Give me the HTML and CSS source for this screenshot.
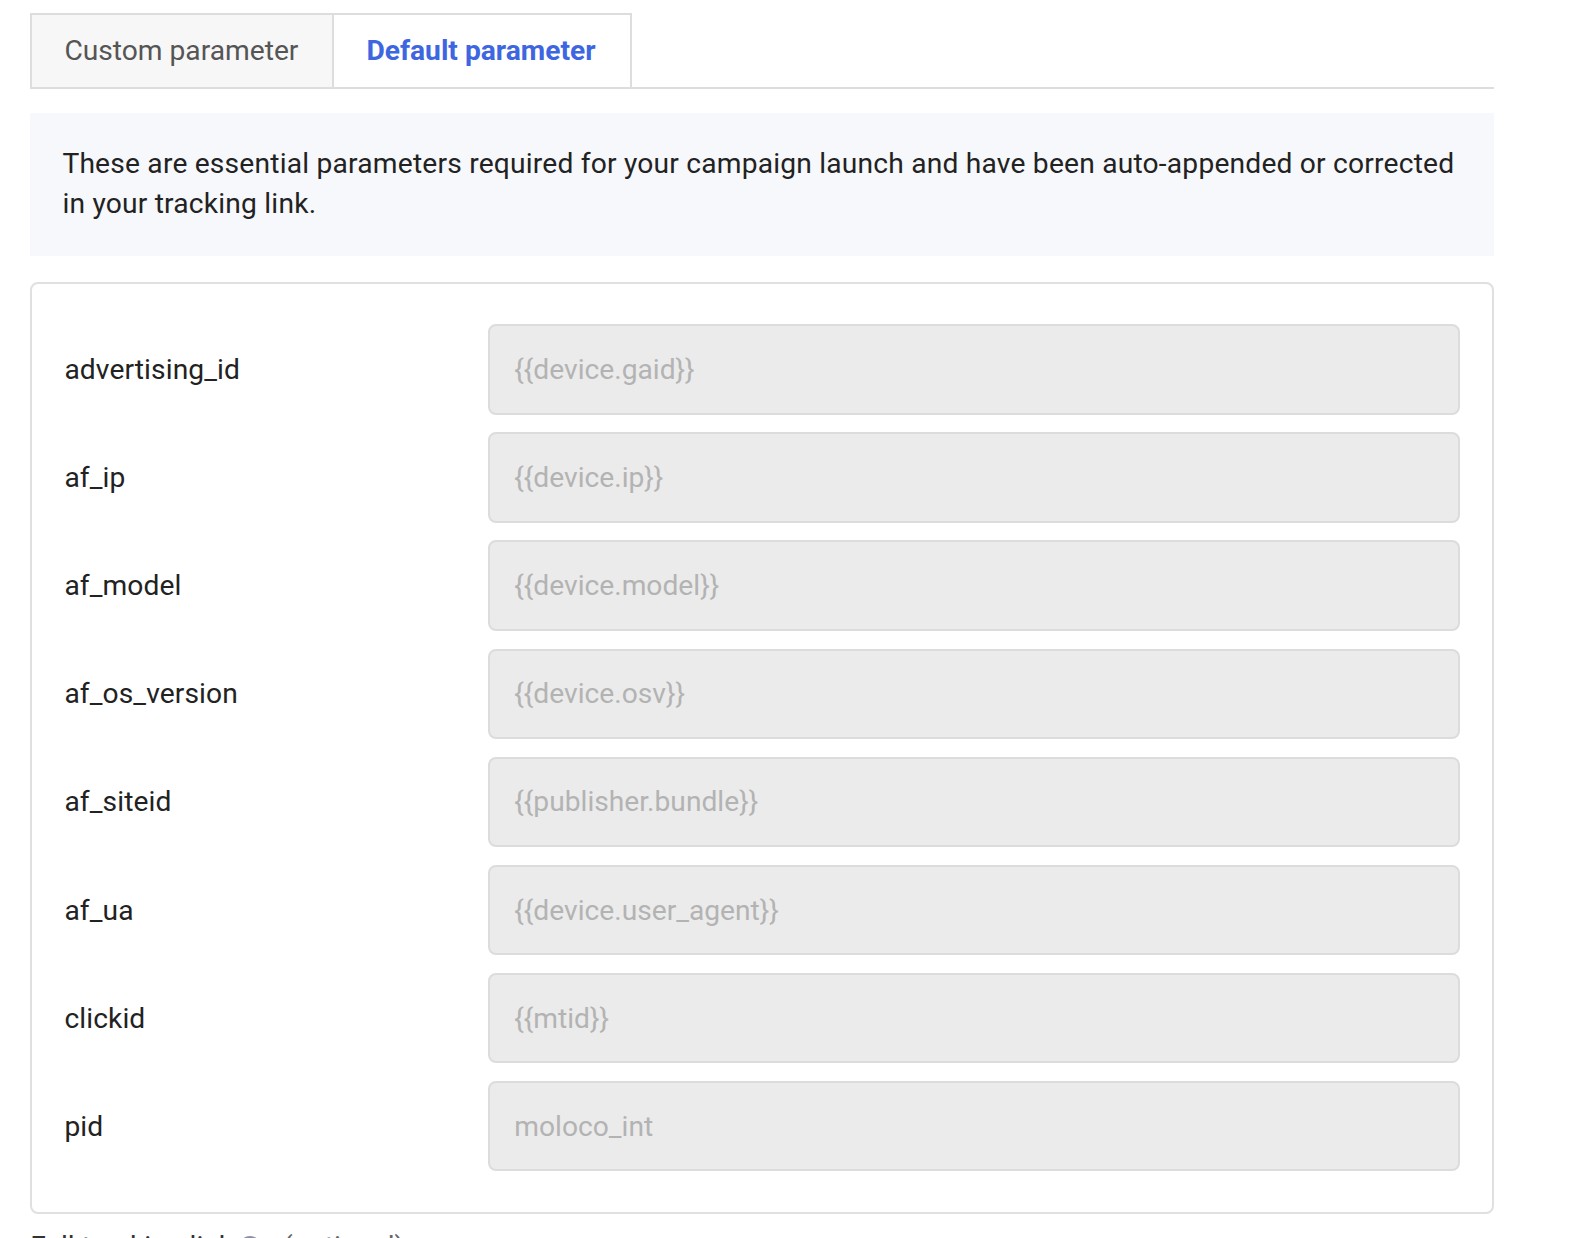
FILE: index.html
```html
<!DOCTYPE html>
<html>
<head>
<meta charset="utf-8">
<link rel="stylesheet" href="styles.css">
</head>
<body>
<div class="page">
  <div class="tabs">
    <div class="tab">Custom parameter</div>
    <div class="tab tab-active">Default parameter</div>
  </div>
  <div class="info">These are essential parameters required for your campaign launch and have been auto-appended or corrected in your tracking link.</div>
  <div class="card">
    <div class="row"><div class="label">advertising_id</div><div class="input">{{device.gaid}}</div></div>
    <div class="row"><div class="label">af_ip</div><div class="input">{{device.ip}}</div></div>
    <div class="row"><div class="label">af_model</div><div class="input">{{device.model}}</div></div>
    <div class="row"><div class="label">af_os_version</div><div class="input">{{device.osv}}</div></div>
    <div class="row"><div class="label">af_siteid</div><div class="input">{{publisher.bundle}}</div></div>
    <div class="row"><div class="label">af_ua</div><div class="input">{{device.user_agent}}</div></div>
    <div class="row"><div class="label">clickid</div><div class="input">{{mtid}}</div></div>
    <div class="row"><div class="label">pid</div><div class="input">moloco_int</div></div>
  </div>
  <div class="footer">
    <span class="footer-label">Full tracking link</span>
    <span class="help-dot"></span>
    <span class="footer-note">(optional)</span>
  </div>
</div>
</body>
</html>
```
FILE: styles.css
```css
html, body {
  margin: 0;
  padding: 0;
  background: #ffffff;
  height: 1238px;
  overflow: hidden;
}
body {
  font-family: Roboto, "Liberation Sans", Arial, sans-serif;
  color: #222222;
}
.page {
  width: 1493.7px;
  height: 1238px;
  box-sizing: border-box;
  overflow: hidden;
  padding: 13.1px 0 0 30.2px;
}
.tabs {
  display: flex;
  border-bottom: 2px solid #dddddd;
  height: 75.5px;
  box-sizing: border-box;
}
.tab {
  display: flex;
  align-items: center;
  padding: 0 0 0 32.2px;
  font-size: 28.2px;
  color: #555555;
  background: #f7f7f7;
  border: 2px solid #dddddd;
  border-bottom: none;
  box-sizing: border-box;
  height: 73.5px;
  width: 304px;
}
.tab-active {
  width: 298px;
  border-left: none;
  background: #ffffff;
  color: #3d66e0;
  font-weight: 700;
}
.info {
  margin-top: 24.2px;
  background: #f7f8fc;
  padding: 31.2px 20px 31.2px 32.2px;
  font-size: 28.2px;
  line-height: 40.3px;
  letter-spacing: 0.2px;
  color: #222222;
}
.card {
  margin-top: 26.2px;
  border: 2px solid #e0e0e0;
  border-radius: 8px;
  padding: 40.3px 32.2px 40.3px 32.2px;
  display: flex;
  flex-direction: column;
  gap: 17.5px;
}
.row {
  display: flex;
  align-items: center;
}
.label {
  width: 423.7px;
  font-size: 28.2px;
  letter-spacing: 0.1px;
  color: #222222;
}
.input {
  flex: 1;
  height: 90.6px;
  box-sizing: border-box;
  background: #ebebeb;
  border: 2px solid #dcdcdc;
  border-radius: 8px;
  display: flex;
  align-items: center;
  padding-left: 24.2px;
  font-size: 28.2px;
  color: #b3b3b3;
}
.footer {
  margin-top: 13px;
  display: flex;
  align-items: center;
  height: 40.3px;
  font-size: 28.2px;
  line-height: 40.3px;
  color: #333333;
}
.help-dot {
  width: 22px;
  height: 22px;
  border-radius: 50%;
  background: #8a8fa3;
  margin-left: 6px;
  margin-right: 22px;
}
.footer-note {
  color: #666666;
}
```
